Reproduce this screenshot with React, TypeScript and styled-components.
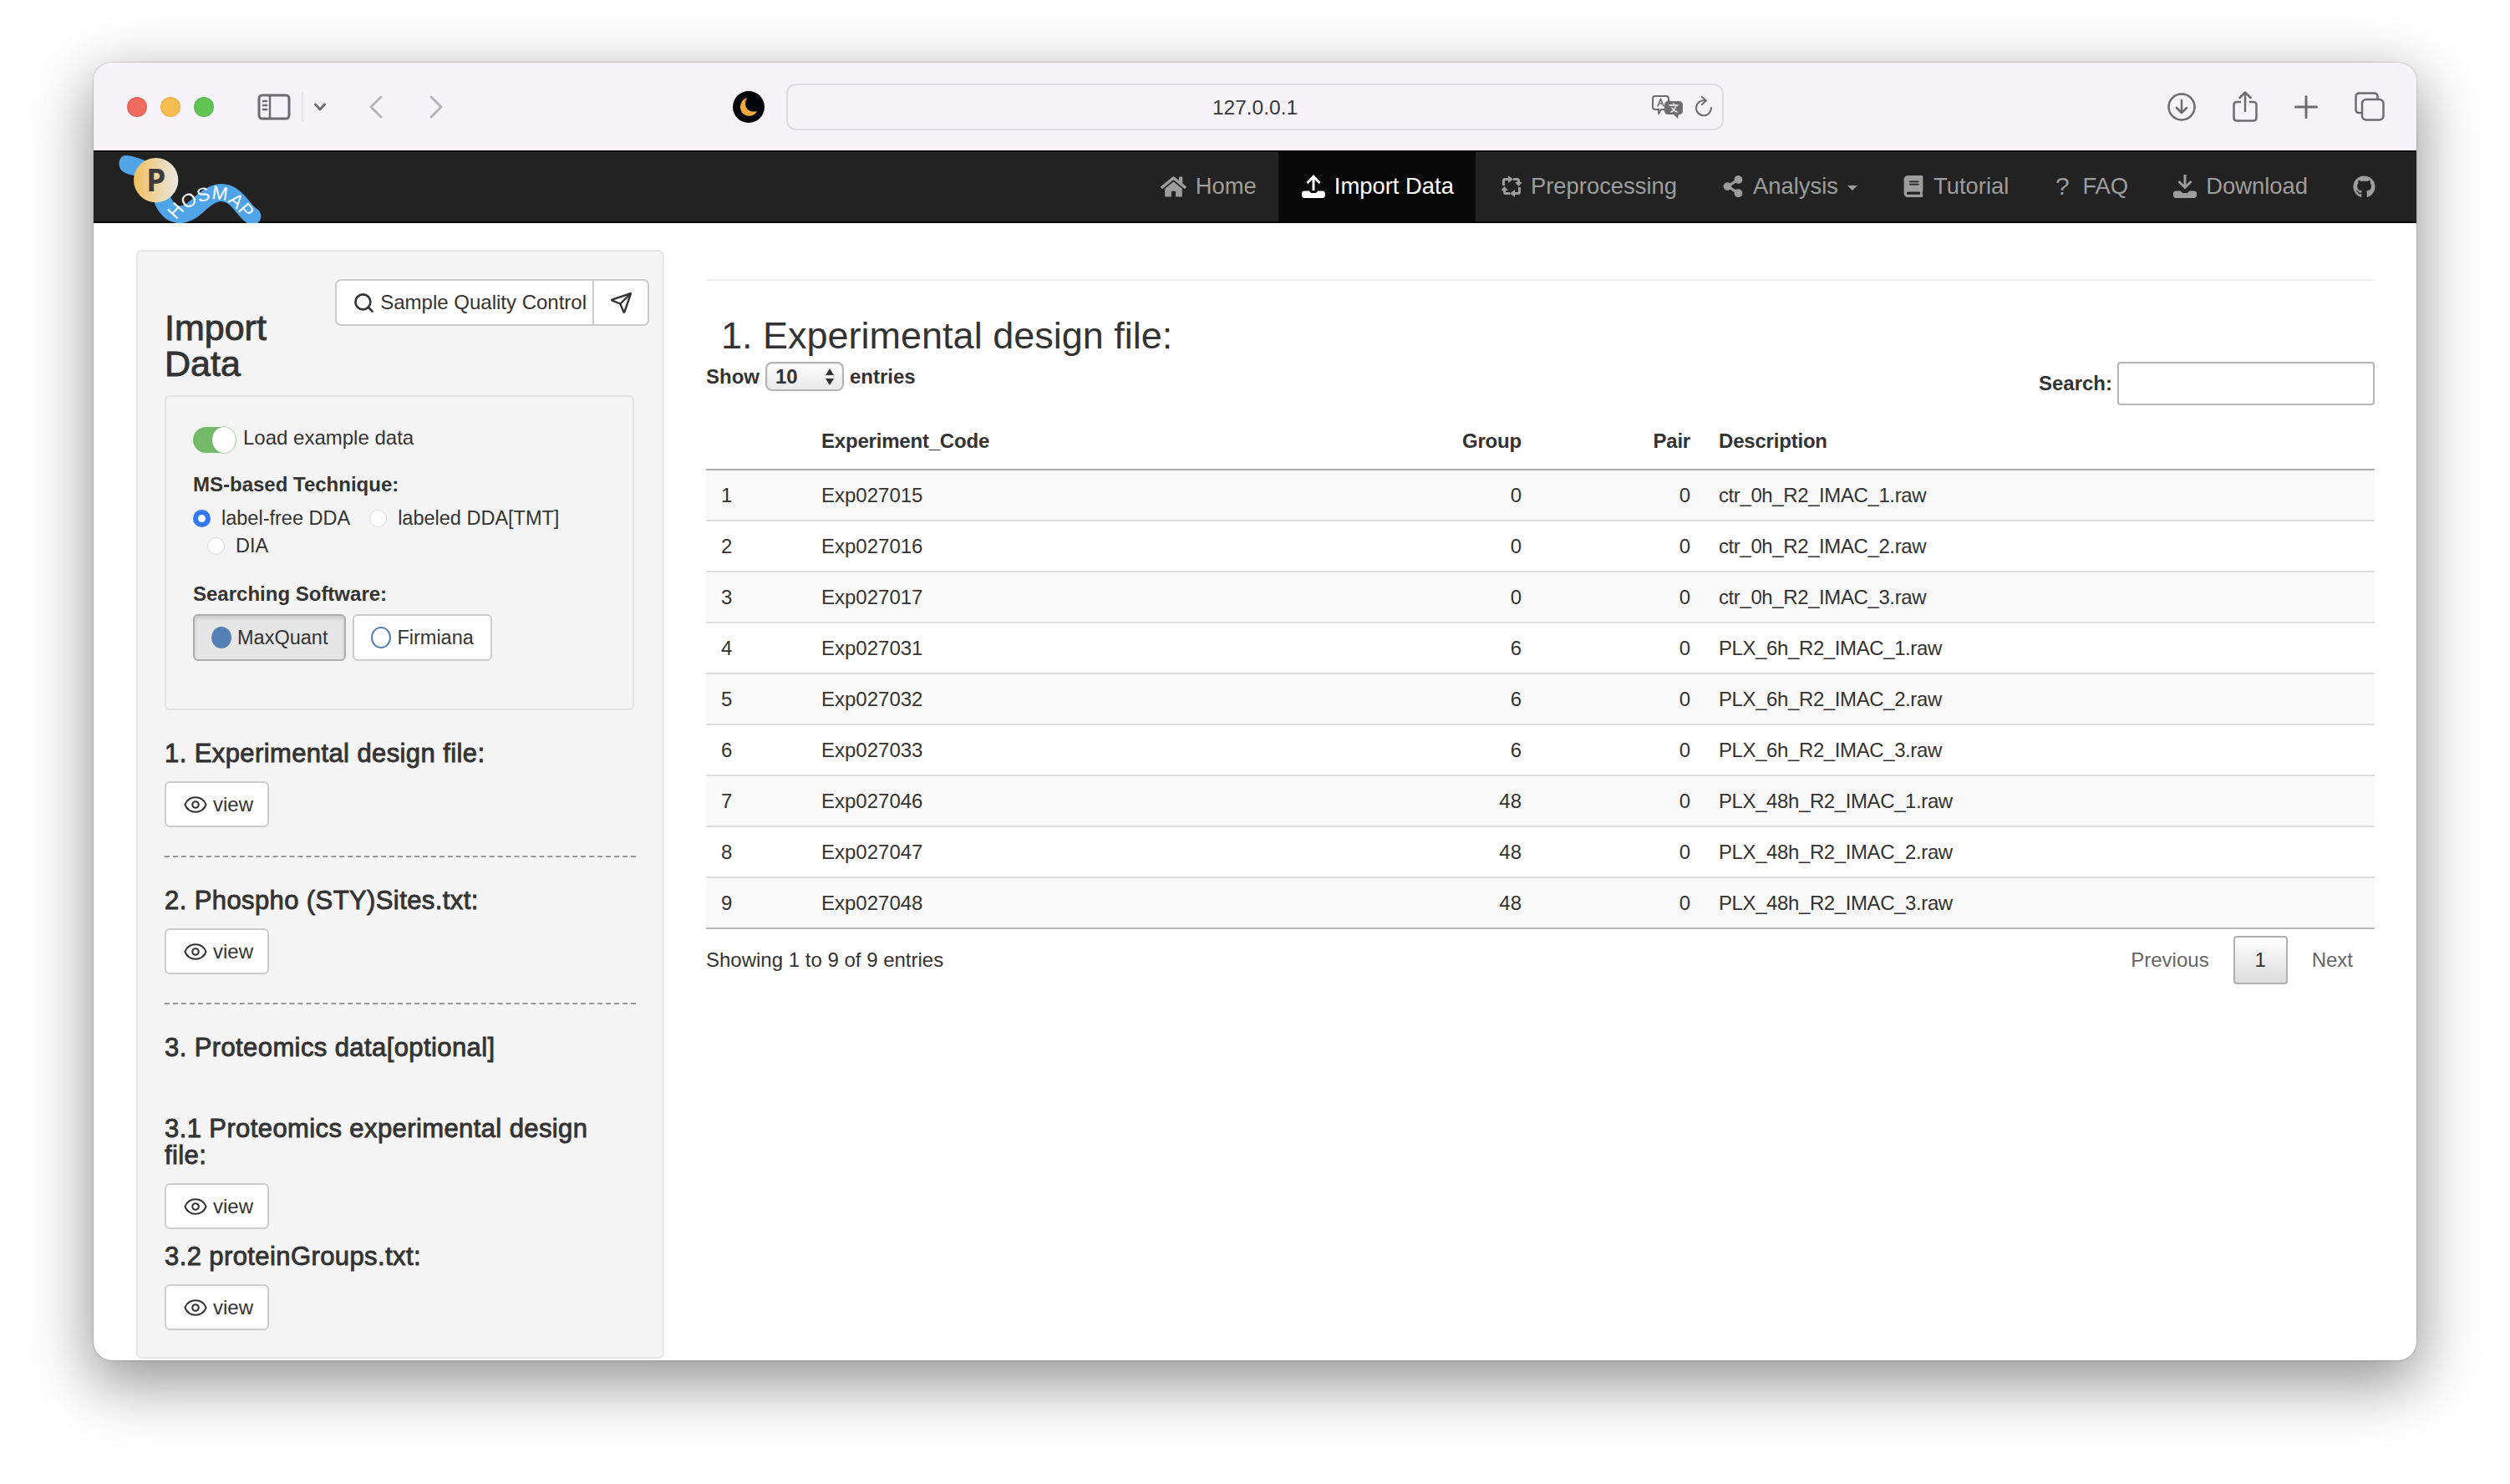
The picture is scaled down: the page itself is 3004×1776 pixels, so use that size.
import * as React from "react"
import styled, { createGlobalStyle } from "styled-components"
import { Eye, Search, Send } from "lucide-react"
import { FaBook, FaGithub, FaHome, FaShareAlt } from "react-icons/fa"

const GlobalStyle = createGlobalStyle`
  html, body { margin: 0; padding: 0; background: #fff; }
  body { font-family: "Liberation Sans", Arial, sans-serif; font-size: 24px; color: #333; }
  * { box-sizing: border-box; }
`

const Page = styled.div`
  width: 3004px;
  height: 1776px;
  padding: 75px 112px 148px 112px;
  background: #fff;
  overflow: hidden;
`

const BrowserWindow = styled.div`
  height: 100%;
  width: 100%;
  display: flex;
  flex-direction: column;
  border-radius: 22px;
  overflow: hidden;
  background: #fff;
  box-shadow: 0 24px 72px 4px rgba(0, 0, 0, 0.42), 0 0 2px rgba(0, 0, 0, 0.4);
`

const Toolbar = styled.div`
  height: 105px;
  flex: none;
  display: flex;
  align-items: center;
  padding: 0 38px 0 40px;
  background: #f6f3f9;
`

const Lights = styled.div`
  display: flex;
  gap: 16px;
`

const Light = styled.span<{ $color: string }>`
  width: 24px;
  height: 24px;
  border-radius: 50%;
  background: ${(p) => p.$color};
  box-shadow: inset 0 0 0 1px rgba(0, 0, 0, 0.08);
`

const ToolIcon = styled.svg<{ $gap?: number }>`
  display: block;
  flex: none;
  margin-left: ${(p) => p.$gap ?? 0}px;
  fill: none;
  stroke: #6f6b72;
  stroke-linecap: round;
  stroke-linejoin: round;
`

const ToolDivider = styled.span`
  width: 2px;
  height: 36px;
  margin: 0 13px 0 13px;
  background: #e8e5ec;
`

const UrlBar = styled.div`
  width: 1122px;
  height: 56px;
  margin-left: 26px;
  flex: none;
  display: grid;
  grid-template-columns: 1fr auto 1fr;
  align-items: center;
  border: 2px solid #dedce2;
  border-radius: 12px;
  font-size: 24.5px;
  color: #3a383c;
`

const UrlText = styled.span`
  grid-column: 2;
  padding-top: 3px;
`

const UrlIcons = styled.div`
  grid-column: 3;
  justify-self: end;
  display: flex;
  align-items: center;
  gap: 13px;
  padding-right: 11px;
`

const RightIcons = styled.div`
  margin-left: auto;
  display: flex;
  align-items: center;
  gap: 44px;
`

const Navbar = styled.nav`
  height: 87px;
  flex: none;
  display: flex;
  align-items: stretch;
  background: #222;
  border-top: 2px solid #080808;
  border-bottom: 2px solid #080808;
  padding-right: 23px;
`

const LogoSvg = styled.svg`
  display: block;
  align-self: flex-start;
  width: 220px;
  height: 85px;
  margin: 0 0 -2px 18px;
  flex: none;
`

const NavItems = styled.div`
  margin-left: auto;
  display: flex;
  align-items: stretch;
`

const NavItem = styled.a<{ $active?: boolean }>`
  display: flex;
  align-items: center;
  gap: 11px;
  padding: 0 26px 1px 28px;
  font-size: 27.4px;
  white-space: nowrap;
  color: ${(p) => (p.$active ? "#fff" : "#9d9d9d")};
  background: ${(p) => (p.$active ? "#080808" : "transparent")};
  svg {
    flex: none;
    display: block;
  }
`

const Caret = styled.span`
  width: 0;
  height: 0;
  margin-top: 3px;
  border-left: 6px solid transparent;
  border-right: 6px solid transparent;
  border-top: 6px solid #9d9d9d;
`

const QuestionMark = styled.span`
  width: 20px;
  margin-right: 3px;
  text-align: center;
  font-size: 30px;
`

const RefreshSvg = styled.svg`
  margin-left: 3px;
`

const Body = styled.div`
  flex: 1;
  min-height: 0;
  display: flex;
  align-items: flex-start;
  padding: 32px 50px 0 51px;
`

const Sidebar = styled.aside`
  width: 632px;
  height: 1327px;
  flex: none;
  padding: 33px 32px 0 32px;
  background: #f5f5f5;
  border: 2px solid #e6e6e6;
  border-radius: 7px;
`

const SidebarHeader = styled.div`
  display: flex;
  justify-content: space-between;
  align-items: flex-start;
  margin-right: -16px;
`

const SidebarTitle = styled.h2`
  width: 180px;
  margin: 37px 0 0 0;
  font-size: 43px;
  line-height: 43px;
  font-weight: 400;
  -webkit-text-stroke: 0.9px #333;
`

const ButtonGroup = styled.div`
  height: 56px;
  display: flex;
  background: #fff;
  border: 2px solid #ccc;
  border-radius: 7px;
`

const GroupButton = styled.span`
  display: flex;
  align-items: center;
  gap: 6px;
  padding: 0 7px 0 19px;
  font-size: 24px;
  white-space: nowrap;
`

const GroupIconButton = styled.span`
  width: 66px;
  display: flex;
  align-items: center;
  justify-content: center;
  border-left: 2px solid #ccc;
`

const Well = styled.div`
  width: 562px;
  height: 377px;
  margin-top: 16px;
  padding: 36px 0 0 32px;
  background: #f5f5f5;
  border: 2px solid #e3e3e3;
  border-radius: 6px;
`

const ToggleRow = styled.div`
  display: flex;
  align-items: center;
  gap: 9px;
  height: 31px;
`

const ToggleLabel = styled.span`
  padding-bottom: 5px;
`

const ToggleTrack = styled.span`
  width: 51px;
  height: 31px;
  display: flex;
  justify-content: flex-end;
  background: #74ba6a;
  border-radius: 16px;
`

const ToggleKnob = styled.span`
  width: 28px;
  height: 31px;
  background: #fff;
  border-radius: 50%;
  box-shadow: 0 0 0 1px rgba(120, 180, 110, 0.5);
`

const FieldLabel = styled.div<{ $top: number }>`
  margin-top: ${(p) => p.$top}px;
  height: 34px;
  line-height: 34px;
  font-weight: 700;
`

const RadioRow = styled.div<{ $indent?: number; $top?: number }>`
  height: 33px;
  margin-top: ${(p) => p.$top ?? 0}px;
  padding-left: ${(p) => p.$indent ?? 0}px;
  display: flex;
  align-items: center;
`

const RadioDot = styled.span<{ $on?: boolean }>`
  width: 21px;
  height: 21px;
  flex: none;
  margin-right: 13px;
  border-radius: 50%;
  background: #fff;
  border: ${(p) => (p.$on ? "6px solid #3478f6" : "1px solid #d8d8d8")};
`

const RadioText = styled.span`
  margin-right: 23px;
  font-size: 23.5px;
  white-space: nowrap;
`

const SoftwareButtons = styled.div`
  display: flex;
  gap: 8px;
  margin-top: 7px;
`

const SoftwareButton = styled.span<{ $on?: boolean }>`
  height: 56px;
  display: flex;
  align-items: center;
  gap: 7px;
  padding: 0 20px;
  font-size: 23.5px;
  border-radius: 6px;
  border: 2px solid ${(p) => (p.$on ? "#adadad" : "#ccc")};
  background: ${(p) => (p.$on ? "#e6e6e6" : "#fff")};
  box-shadow: ${(p) => (p.$on ? "inset 0 3px 5px rgba(0,0,0,.125)" : "none")};
`

const SoftwareDot = styled.span<{ $on?: boolean }>`
  width: 24px;
  height: 26px;
  border-radius: 50%;
  border: 2px solid #5580b4;
  background: ${(p) => (p.$on ? "#5580b4" : "#fff")};
`

const SectionHeading = styled.h4<{ $top: number }>`
  max-width: 540px;
  margin: ${(p) => p.$top}px 0 0 0;
  font-size: 31px;
  line-height: 32px;
  font-weight: 400;
  letter-spacing: 0.4px;
  -webkit-text-stroke: 0.9px #333;
`

const ViewButton = styled.span`
  width: 125px;
  height: 55px;
  margin-top: 17px;
  display: flex;
  align-items: center;
  gap: 6px;
  padding-left: 20px;
  background: #fff;
  border: 2px solid #ccc;
  border-radius: 6px;
`

const DashedRule = styled.hr`
  width: 564px;
  margin: 34px 0 0 0;
  border: 0;
  border-top: 2px dashed #999;
`

const Main = styled.main`
  flex: 1;
  min-width: 0;
  margin-left: 50px;
  padding-top: 35px;
`

const MainRule = styled.hr`
  margin: 0;
  border: 0;
  border-top: 2px solid #eee;
`

const MainTitle = styled.h3`
  margin: 41px 0 0 18px;
  font-size: 45px;
  line-height: 50px;
  font-weight: 400;
`

const Controls = styled.div`
  display: flex;
  justify-content: space-between;
  align-items: flex-start;
  height: 52px;
  margin-top: 6px;
  font-weight: 700;
`

const LengthControl = styled.div`
  height: 35px;
  display: flex;
  align-items: center;
  gap: 7px;
`

const FakeSelect = styled.span`
  width: 94px;
  height: 35px;
  display: flex;
  align-items: center;
  justify-content: space-between;
  padding: 0 9px 0 10px;
  border: 2px solid #b4b4b4;
  border-radius: 8px;
  background: linear-gradient(#fdfdfd, #e9e9e9);
  box-shadow: inset 0 1px 2px rgba(0, 0, 0, 0.1);
`

const SearchControl = styled.label`
  height: 52px;
  display: flex;
  align-items: center;
  gap: 6px;
`

const SearchInput = styled.span`
  width: 308px;
  height: 52px;
  background: #fff;
  border: 2px solid #b5b5b5;
  border-radius: 4px;
`

const TableRow = styled.div<{ $striped?: boolean }>`
  height: 61px;
  display: grid;
  grid-template-columns: 120px 674px 200px 202px 1fr;
  align-items: center;
  background: ${(p) => (p.$striped ? "#f9f9f9" : "#fff")};
  border-bottom: 2px solid #ddd;
  &:last-child {
    border-bottom-color: #b5b5b5;
  }
`

const TableHead = styled(TableRow)`
  height: 70px;
  margin-top: 8px;
  padding-top: 2px;
  font-weight: 700;
  letter-spacing: -0.2px;
  border-bottom-color: #aaa;
`

const Cell = styled.div<{ $right?: boolean }>`
  padding: 0 18px;
  text-align: ${(p) => (p.$right ? "right" : "left")};
  white-space: nowrap;
`

const DescriptionCell = styled(Cell)`
  padding-left: 16px;
`

const FileCell = styled(DescriptionCell)`
  letter-spacing: -0.4px;
`

const TableFooter = styled.div`
  height: 58px;
  margin-top: 8px;
  padding-right: 26px;
  display: flex;
  justify-content: space-between;
  align-items: center;
`

const Pagination = styled.div`
  height: 58px;
  display: flex;
  align-items: center;
  gap: 29px;
  color: #666;
`

const PageButton = styled.span`
  width: 65px;
  height: 58px;
  display: flex;
  align-items: center;
  justify-content: center;
  color: #333;
  border: 2px solid #b0b0b0;
  border-radius: 4px;
  background: linear-gradient(#fff, #dcdcdc);
`

const rows = [
  ["1", "Exp027015", "0", "0", "ctr_0h_R2_IMAC_1.raw"],
  ["2", "Exp027016", "0", "0", "ctr_0h_R2_IMAC_2.raw"],
  ["3", "Exp027017", "0", "0", "ctr_0h_R2_IMAC_3.raw"],
  ["4", "Exp027031", "6", "0", "PLX_6h_R2_IMAC_1.raw"],
  ["5", "Exp027032", "6", "0", "PLX_6h_R2_IMAC_2.raw"],
  ["6", "Exp027033", "6", "0", "PLX_6h_R2_IMAC_3.raw"],
  ["7", "Exp027046", "48", "0", "PLX_48h_R2_IMAC_1.raw"],
  ["8", "Exp027047", "48", "0", "PLX_48h_R2_IMAC_2.raw"],
  ["9", "Exp027048", "48", "0", "PLX_48h_R2_IMAC_3.raw"],
]

const Logo = () => (
  <LogoSvg viewBox="0 36 660 255" aria-label="PHOSMAP logo">
    <defs>
      <linearGradient id="ballFill" x1="0" x2="1" y1="0" y2="0">
        <stop offset="0" stopColor="#f0c05e" />
        <stop offset="1" stopColor="#eae8e2" />
      </linearGradient>
      <path id="wavePath" d="M243 281 C262 250 290 232 325 218 C355 206 395 200 425 215 C455 232 476 262 500 288" />
    </defs>
    <path d="M62 48 C42 48 36 68 38 84 C42 110 70 118 104 122 L140 70 C112 60 86 48 62 48Z" fill="#50a4e8" />
    <path
      d="M196 214 C222 268 266 276 316 232 C350 200 395 160 445 195 C478 218 490 252 516 266"
      fill="none"
      stroke="#50a4e8"
      strokeWidth="62"
      strokeLinecap="round"
    />
    <circle cx="170" cy="137" r="80" fill="url(#ballFill)" />
    <text x="170" y="178" textAnchor="middle" fontFamily="Open Sans, sans-serif" fontWeight="700" fontSize="112" fill="#3b3b3b">
      P
    </text>
    <text fontFamily="Liberation Sans, sans-serif" fontSize="68" letterSpacing="1" fill="#fff">
      <textPath href="#wavePath">HOSMAP</textPath>
    </text>
  </LogoSvg>
)

const MoonIcon = () => (
  <ToolIcon $gap={347} width="38" height="38" viewBox="0 0 38 38" style={{ stroke: "none" }}>
    <circle cx="19" cy="19" r="19" fill="#03030a" />
    <path d="M17 8 C12 17 17 27 29 24 C26 31 15 32 10.500 25 C7 18 10 10 17 8Z" fill="#f2a93b" />
  </ToolIcon>
)

const ImportIcon = ({ down }: { down?: boolean }) => (
  <svg width="28" height="28" viewBox="0 0 28 28" fill="currentColor">
    <path d={down ? "M12.500 0h3v12l5-5 2 2-8.500 8.500L5.500 9l2-2 5 5z" : "M12.500 19V6l-5 5-2-2L14 0l8.500 9-2 2-5-5v13z"} />
    <path d="M3 19h6l2 2.500h6l2-2.500h6c1.500 0 3 1.300 3 3v2c0 2-1.500 3.500-3 3.500H3c-1.700 0-3-1.500-3-3.500v-2c0-1.700 1.300-3 3-3z" transform="translate(0 0.500)" />
  </svg>
)

const RefreshIcon = () => (
  <RefreshSvg width="24" height="26" viewBox="0 0 24 26" fill="currentColor">
    <path d="M1 12V6c0-2 1.500-3 3-3h4v3H5c-.6 0-1 .4-1 1v5z" />
    <path d="M8 0l6 4.500L8 9z" />
    <path d="M23 14v6c0 2-1.500 3-3 3h-4v-3h3c.6 0 1-.4 1-1v-5z" />
    <path d="M16 26l-6-4.500L16 17z" />
    <path d="M15 3h5c1.500 0 3 1 3 3v2h3l-4.500 5L17 8h3V7c0-.6-.4-1-1-1h-4z" transform="translate(-1 0)" />
    <path d="M9 23H4c-1.500 0-3-1-3-3v-2h-3l4.500-5L7 18H4v1c0 .6.400 1 1 1h4z" transform="translate(1 0)" />
  </RefreshSvg>
)

const EyeGlyph = () => <Eye size={30} strokeWidth={1.7} color="#333" />

const App = () => (
  <Page>
    <GlobalStyle />
    <BrowserWindow>
      <Toolbar>
        <Lights>
          <Light $color="#ee6a5f" />
          <Light $color="#f5bd4f" />
          <Light $color="#61c454" />
        </Lights>
        <ToolIcon $gap={52} width="40" height="32" viewBox="0 0 40 32" strokeWidth="3">
          <rect x="2" y="2" width="36" height="28" rx="4" />
          <path d="M15 2v28M7 9h4M7 14h4M7 19h4" strokeWidth="2.500" />
        </ToolIcon>
        <ToolDivider />
        <ToolIcon width="14" height="10" viewBox="0 0 14 10" strokeWidth="3">
          <path d="M1.500 2L7 8l5.500-6" />
        </ToolIcon>
        <ToolIcon $gap={52} width="16" height="28" viewBox="0 0 16 28" strokeWidth="3" style={{ stroke: "#b6b4ba" }}>
          <path d="M14 2L2 14l12 12" />
        </ToolIcon>
        <ToolIcon $gap={56} width="16" height="28" viewBox="0 0 16 28" strokeWidth="3" style={{ stroke: "#b6b4ba" }}>
          <path d="M2 2l12 12L2 26" />
        </ToolIcon>
        <MoonIcon />
        <UrlBar>
          <UrlText>127.0.0.1</UrlText>
          <UrlIcons>
            <ToolIcon width="38" height="28" viewBox="0 0 38 28" strokeWidth="2">
              <path d="M4 1h13c2 0 3 1 3 3v10c0 2-1 3-3 3H11l-3 5v-5H4c-2 0-3-1-3-3V4c0-2 1-3 3-3z" fill="#f6f3f9" />
              <path d="M7 13l3.500-9L14 13M8.200 10h4.600" strokeWidth="1.500" />
              <path d="M19 7h14c2 0 4 2 4 4v8c0 2-2 4-4 4h-1l-1 5-5-5h-7c-2 0-4-2-4-4v-8c0-2 2-4 4-4z" fill="#6f6b72" stroke="none" />
              <path d="M21 12h10M26 10v2M23 20c3-1 5-4 6-8M24 15c1 2 3 4 6 5" stroke="#f6f3f9" strokeWidth="1.500" />
            </ToolIcon>
            <ToolIcon width="22" height="26" viewBox="0 0 22 26" strokeWidth="2">
              <path d="M13 5.500A9 9 0 1 0 20 14M9 1l5 4.500L9 10" />
            </ToolIcon>
          </UrlIcons>
        </UrlBar>
        <RightIcons>
          <ToolIcon width="34" height="34" viewBox="0 0 34 34" strokeWidth="2.500">
            <circle cx="17" cy="17" r="15.500" />
            <path d="M17 9v15M11 18l6 6 6-6" />
          </ToolIcon>
          <ToolIcon width="30" height="37" viewBox="0 0 30 37" strokeWidth="2.500">
            <path d="M9 13H5c-2 0-3.500 1.500-3.500 3.500v15C1.500 34 3 35.500 5 35.500h20c2 0 3.500-1.500 3.500-3.500V16.500c0-2-1.500-3.500-3.500-3.500h-4M15 24V2M8.500 8L15 1.500 21.500 8" />
          </ToolIcon>
          <ToolIcon width="28" height="28" viewBox="0 0 28 28" strokeWidth="3">
            <path d="M14 1.500v25M1.500 14h25" />
          </ToolIcon>
          <ToolIcon width="36" height="35" viewBox="0 0 36 35" strokeWidth="2.500">
            <path d="M7 25H5c-2 0-3.500-1.500-3.500-3.500V6C1.500 3 3 1.500 6 1.500h17c3 0 4.500 1.500 4.500 4v3" />
            <rect x="9" y="9" width="25.500" height="24.500" rx="5" />
          </ToolIcon>
        </RightIcons>
      </Toolbar>

      <Navbar>
        <Logo />
        <NavItems>
          <NavItem>
            <FaHome size={31} />
            Home
          </NavItem>
          <NavItem $active>
            <ImportIcon />
            Import Data
          </NavItem>
          <NavItem>
            <RefreshIcon />
            Preprocessing
          </NavItem>
          <NavItem>
            <FaShareAlt size={26} />
            Analysis
            <Caret />
          </NavItem>
          <NavItem>
            <FaBook size={26} />
            Tutorial
          </NavItem>
          <NavItem>
            <QuestionMark>?</QuestionMark>
            FAQ
          </NavItem>
          <NavItem>
            <ImportIcon down />
            Download
          </NavItem>
          <NavItem>
            <FaGithub size={27} />
          </NavItem>
        </NavItems>
      </Navbar>

      <Body>
        <Sidebar>
          <SidebarHeader>
            <SidebarTitle>Import Data</SidebarTitle>
            <ButtonGroup>
              <GroupButton>
                <Search size={27} strokeWidth={2.3} color="#333" />
                Sample Quality Control
              </GroupButton>
              <GroupIconButton>
                <Send size={27} strokeWidth={2.1} color="#333" />
              </GroupIconButton>
            </ButtonGroup>
          </SidebarHeader>

          <Well>
            <ToggleRow>
              <ToggleTrack>
                <ToggleKnob />
              </ToggleTrack>
              <ToggleLabel>Load example data</ToggleLabel>
            </ToggleRow>
            <FieldLabel $top={21}>MS-based Technique:</FieldLabel>
            <RadioRow $top={7}>
              <RadioDot $on />
              <RadioText>label-free DDA</RadioText>
              <RadioDot />
              <RadioText>labeled DDA[TMT]</RadioText>
            </RadioRow>
            <RadioRow $indent={17}>
              <RadioDot />
              <RadioText>DIA</RadioText>
            </RadioRow>
            <FieldLabel $top={24}>Searching Software:</FieldLabel>
            <SoftwareButtons>
              <SoftwareButton $on>
                <SoftwareDot $on />
                MaxQuant
              </SoftwareButton>
              <SoftwareButton>
                <SoftwareDot />
                Firmiana
              </SoftwareButton>
            </SoftwareButtons>
          </Well>

          <SectionHeading $top={36}>1. Experimental design file:</SectionHeading>
          <ViewButton>
            <EyeGlyph />
            view
          </ViewButton>
          <DashedRule />
          <SectionHeading $top={36}>2. Phospho (STY)Sites.txt:</SectionHeading>
          <ViewButton>
            <EyeGlyph />
            view
          </ViewButton>
          <DashedRule />
          <SectionHeading $top={36}>3. Proteomics data[optional]</SectionHeading>
          <SectionHeading $top={65}>3.1 Proteomics experimental design file:</SectionHeading>
          <ViewButton>
            <EyeGlyph />
            view
          </ViewButton>
          <SectionHeading $top={17}>3.2 proteinGroups.txt:</SectionHeading>
          <ViewButton>
            <EyeGlyph />
            view
          </ViewButton>
        </Sidebar>

        <Main>
          <MainRule />
          <MainTitle>1. Experimental design file:</MainTitle>
          <Controls>
            <LengthControl>
              Show
              <FakeSelect>
                10
                <svg width="12" height="22" viewBox="0 0 12 22" fill="#333">
                  <path d="M6 1l5 8H1zM6 21l5-8H1z" />
                </svg>
              </FakeSelect>
              entries
            </LengthControl>
            <SearchControl>
              Search:
              <SearchInput />
            </SearchControl>
          </Controls>

          <TableHead as="div">
            <Cell />
            <Cell>Experiment_Code</Cell>
            <Cell $right>Group</Cell>
            <Cell $right>Pair</Cell>
            <DescriptionCell>Description</DescriptionCell>
          </TableHead>
          <div>
            {rows.map((row, i) => (
              <TableRow key={row[0]} $striped={i % 2 === 0}>
                <Cell>{row[0]}</Cell>
                <Cell>{row[1]}</Cell>
                <Cell $right>{row[2]}</Cell>
                <Cell $right>{row[3]}</Cell>
                <FileCell>{row[4]}</FileCell>
              </TableRow>
            ))}
          </div>

          <TableFooter>
            <span>Showing 1 to 9 of 9 entries</span>
            <Pagination>
              Previous
              <PageButton>1</PageButton>
              Next
            </Pagination>
          </TableFooter>
        </Main>
      </Body>
    </BrowserWindow>
  </Page>
)

export default App
